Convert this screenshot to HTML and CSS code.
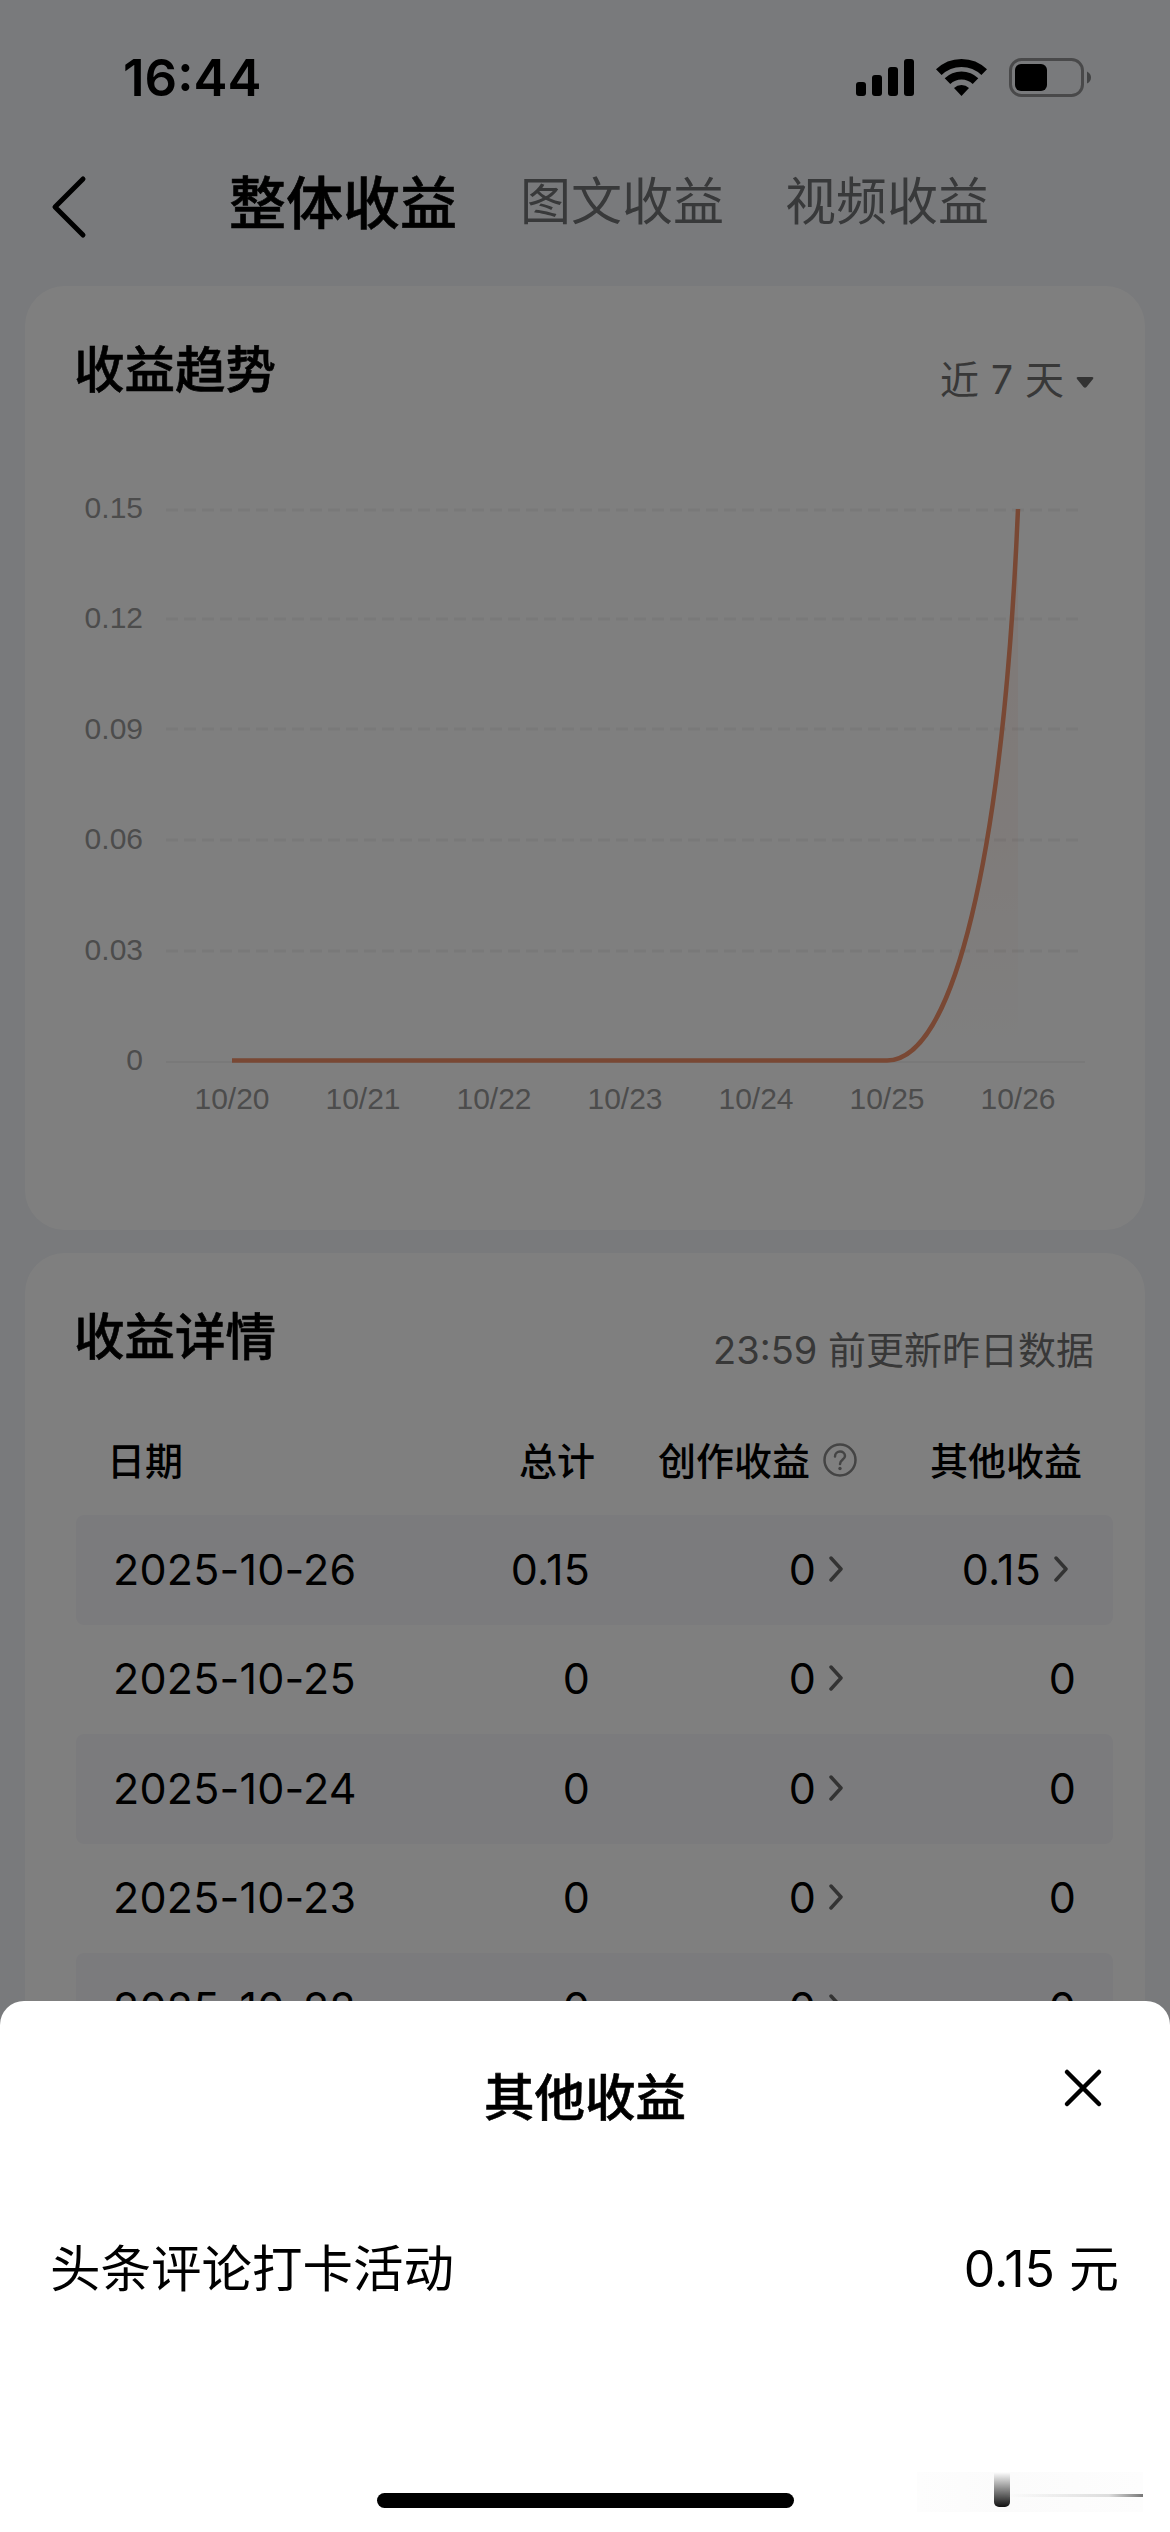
FILE: index.html
```
<!DOCTYPE html>
<html lang="zh-CN">
<head>
	<meta charset="utf-8">
	<title>整体收益</title>
	<link rel="stylesheet" href="styles.css">
</head>
<body>
	<div class="page">
		<div class="status-bar">
			<span class="time">16:44</span>
			<svg class="status-icons" width="236" height="40" viewBox="0 0 236 40">
				<!-- signal -->
				<rect x="0" y="24" width="10" height="14" rx="3"/>
				<rect x="16" y="17" width="10" height="21" rx="3"/>
				<rect x="32" y="9" width="10" height="29" rx="3"/>
				<rect x="48" y="1" width="10" height="37" rx="3"/>
				<!-- wifi -->
				<path class="wave" d="M82.800 14.200 A32.500 32.500 0 0 1 128.200 14.200"/>
				<path class="wave" d="M91.500 23.200 A20 20 0 0 1 119.500 23.200"/>
				<path d="M98 30 A11 11 0 0 1 113 30 L105.500 38 Z"/>
				<!-- battery -->
				<rect class="battery-line" x="154.500" y="1.500" width="72" height="36" rx="11"/>
				<rect x="159" y="6" width="32" height="27" rx="6"/>
				<path class="battery-cap" d="M231 13.500 Q235 15.500 235 19.500 Q235 23.500 231 25.500 Z"/>
			</svg>
		</div>

		<div class="nav">
			<svg class="back" width="36" height="64" viewBox="0 0 36 64">
				<path d="M32 4 L4 32 L32 60"/>
			</svg>
			<span class="tab active">整体收益</span>
			<span class="tab">图文收益</span>
			<span class="tab">视频收益</span>
		</div>

		<div class="card trend">
			<div class="card-head">
				<h2>收益趋势</h2>
				<span class="range">近 7 天
					<svg width="18" height="13" viewBox="0 0 18 13"><path d="M2 1 H16 Q18 1 17 3 L10.500 11 Q9 12.500 7.500 11 L1 3 Q0 1 2 1 Z"/></svg>
				</span>
			</div>
			<svg class="chart" width="1120" height="660" viewBox="25 480 1120 660">
				<defs>
					<linearGradient id="area" x1="0" y1="0" x2="0" y2="1">
						<stop offset="0" stop-color="#ff7f50" stop-opacity="0.10"/>
						<stop offset="0.600" stop-color="#ff7f50" stop-opacity="0.060"/>
						<stop offset="1" stop-color="#ff7f50" stop-opacity="0"/>
					</linearGradient>
				</defs>
				<g class="grid">
					<path d="M166 510 H1080 M166 619 H1080 M166 729 H1080 M166 840 H1080 M166 951 H1080"/>
					<path class="axis" d="M166 1062 H1085"/>
				</g>
				<g class="y-labels">
					<text x="143" y="518">0.15</text>
					<text x="143" y="628">0.12</text>
					<text x="143" y="739">0.09</text>
					<text x="143" y="849">0.06</text>
					<text x="143" y="960">0.03</text>
					<text x="143" y="1070">0</text>
				</g>
				<g class="x-labels">
					<text x="232" y="1109">10/20</text>
					<text x="363" y="1109">10/21</text>
					<text x="494" y="1109">10/22</text>
					<text x="625" y="1109">10/23</text>
					<text x="756" y="1109">10/24</text>
					<text x="887" y="1109">10/25</text>
					<text x="1018" y="1109">10/26</text>
				</g>
				<path fill="url(#area)" d="M887 1060 C953 1060 1003 860 1018 509 V1060 Z"/>
				<path class="line" d="M232 1060.500 H887 C953 1060.500 1003 860 1018 509"/>
			</svg>
		</div>

		<div class="card detail">
			<div class="card-head">
				<h2>收益详情</h2>
				<span class="update">23:59 前更新昨日数据</span>
			</div>
			<div class="row head">
				<span>日期</span>
				<span>总计</span>
				<span>创作收益
					<svg class="help" width="36" height="36" viewBox="0 0 36 36">
						<circle cx="18" cy="18" r="15.500"/>
						<path d="M13 14.500 C13 8 23 8 23 14 C23 17.500 18 17.500 18 22"/>
						<circle class="dot" cx="18" cy="26.500" r="1.700"/>
					</svg>
				</span>
				<span>其他收益</span>
			</div>
			<div class="row odd">
				<span>2025-10-26</span>
				<span>0.15</span>
				<span>0<svg class="arrow" width="14" height="26" viewBox="0 0 14 26"><path d="M2 2 L12 13 L2 24"/></svg></span>
				<span class="link">0.15<svg class="arrow" width="14" height="26" viewBox="0 0 14 26"><path d="M2 2 L12 13 L2 24"/></svg></span>
			</div>
			<div class="row">
				<span>2025-10-25</span>
				<span>0</span>
				<span>0<svg class="arrow" width="14" height="26" viewBox="0 0 14 26"><path d="M2 2 L12 13 L2 24"/></svg></span>
				<span>0</span>
			</div>
			<div class="row odd">
				<span>2025-10-24</span>
				<span>0</span>
				<span>0<svg class="arrow" width="14" height="26" viewBox="0 0 14 26"><path d="M2 2 L12 13 L2 24"/></svg></span>
				<span>0</span>
			</div>
			<div class="row">
				<span>2025-10-23</span>
				<span>0</span>
				<span>0<svg class="arrow" width="14" height="26" viewBox="0 0 14 26"><path d="M2 2 L12 13 L2 24"/></svg></span>
				<span>0</span>
			</div>
			<div class="row odd">
				<span>2025-10-22</span>
				<span>0</span>
				<span>0<svg class="arrow" width="14" height="26" viewBox="0 0 14 26"><path d="M2 2 L12 13 L2 24"/></svg></span>
				<span>0</span>
			</div>
		</div>
	</div>

	<div class="mask"></div>

	<!-- Bottom sheet -->
	<div class="sheet">
		<div class="sheet-head">
			<h3>其他收益</h3>
			<svg class="close" width="42" height="42" viewBox="0 0 42 42"><path d="M5 5 L37 37 M37 5 L5 37"/></svg>
		</div>
		<div class="sheet-item">
			<span>头条评论打卡活动</span>
			<span class="amount">0.15 元</span>
		</div>
		<div class="home-bar"></div>
		<div class="smudge"><i></i></div>
	</div>
</body>
</html>
```

FILE: styles.css
```
* {
	box-sizing: border-box;
}
body {
	background: #f3f5f8;
	color: #000;
	font-family: Inter, "Noto Sans CJK SC", sans-serif;
	height: 2532px;
	margin: 0;
	overflow: hidden;
	position: relative;
	width: 1170px;
}
h2, h3 {
	-webkit-text-stroke: 0.600px #000;
	font-size: 50.500px;
	font-weight: 500;
	line-height: 60px;
	margin: 0;
}
.page {
	height: 2532px;
	overflow: hidden;
}
.status-bar {
	align-items: flex-start;
	display: flex;
	height: 150px;
	justify-content: space-between;
	padding: 58px 78px 0 123px;
}
.time {
	font-size: 51px;
	font-weight: 600;
	line-height: 40px;
}
.wave {
	fill: none;
	stroke: #000;
	stroke-width: 8;
}
.battery-line {
	fill: none;
	stroke: #000;
	stroke-opacity: 0.4;
	stroke-width: 3;
}
.battery-cap {
	fill-opacity: 0.45;
}
.nav {
	align-items: center;
	display: flex;
	height: 136px;
	padding-left: 51px;
	padding-bottom: 28px;
}
.back {
	fill: none;
	margin-right: 142px;
	margin-top: 6px;
	stroke: #000;
	stroke-linecap: round;
	stroke-linejoin: round;
	stroke-width: 5;
}
.tab {
	color: #707275;
	font-size: 51px;
	line-height: 60px;
	margin-bottom: 5px;
	margin-right: 61px;
}
.tab.active {
	-webkit-text-stroke: 0.600px #000;
	color: #000;
	font-size: 57px;
	font-weight: 500;
	margin-bottom: 0;
	margin-right: 63px;
}
.card {
	background: #fff;
	border-radius: 40px;
	margin: 0 25px;
}
.trend {
	height: 944px;
	margin-bottom: 23px;
}
.card-head {
	display: flex;
	height: 124px;
	justify-content: space-between;
	padding: 54px 51px 0 49px;
}
.range, .update {
	color: #707070;
	font-size: 39px;
	line-height: 60px;
	margin-top: 10px;
}
.range {
	word-spacing: 1px;
}
.range svg {
	fill: #666;
	vertical-align: 5px;
}
.update {
	font-size: 38px;
	margin-top: 13px;
}
.chart {
	display: block;
	margin-top: 70px;
}
.chart text {
	fill: #999;
	font-family: "Liberation Sans", sans-serif;
	font-size: 30px;
}
.y-labels {
	text-anchor: end;
}
.x-labels {
	text-anchor: middle;
}
.grid path {
	stroke: #f2f2f2;
	stroke-dasharray: 12 6;
	stroke-width: 3;
}
.grid .axis {
	stroke-dasharray: none;
	stroke-width: 2;
}
.chart .line {
	fill: none;
	stroke: #f29068;
	stroke-width: 4.500;
}
.detail {
	height: 900px;
}
.row {
	align-items: center;
	border-radius: 8px;
	display: grid;
	font-size: 43px;
	grid-template-columns: 245px 232px 253px 233px;
	height: 109.500px;
	letter-spacing: 0.200px;
	margin: 0 32px 0 51px;
	padding-bottom: 2px;
	padding-left: 37px;
}
.row span {
	align-items: center;
	display: flex;
	justify-content: flex-end;
}
.row span:first-child {
	justify-content: flex-start;
}
.odd {
	background: #f7f7fa;
}
.head {
	font-size: 38px;
	font-weight: 500;
	grid-template-columns: 245px 243px 263px 224px;
	height: 108px;
	letter-spacing: 0;
	margin-top: 30px;
	padding-bottom: 6px;
	padding-left: 31px;
}
.arrow {
	fill: none;
	margin-left: 13px;
	stroke: #666;
	stroke-linecap: round;
	stroke-linejoin: round;
	stroke-width: 3.500;
}
.link {
	margin-right: 8px;
}
.help {
	fill: none;
	margin-left: 12px;
	margin-top: 4px;
	stroke: #888;
	stroke-linecap: round;
	stroke-width: 2.500;
}
.help .dot {
	fill: #888;
	stroke: none;
}
.mask {
	background: rgba(0, 0, 0, 0.5);
	inset: 0;
	position: absolute;
}
.sheet {
	background: #fff;
	border-radius: 24px 24px 0 0;
	bottom: 0;
	height: 531px;
	left: 0;
	position: absolute;
	right: 0;
}
.sheet-head {
	padding-top: 67px;
	text-align: center;
}
.close {
	fill: none;
	position: absolute;
	right: 66px;
	stroke: #000;
	stroke-linecap: round;
	stroke-width: 4.500;
	top: 66px;
}
.sheet-item {
	display: flex;
	font-size: 50.500px;
	justify-content: space-between;
	line-height: 60px;
	padding: 111px 51px 0 50px;
}
.amount {
	font-size: 50px;
}
.home-bar {
	background: #000;
	border-radius: 8px;
	height: 15px;
	margin: 194px auto 0;
	width: 417px;
}
.smudge {
	background: linear-gradient(90deg, #fdfdfd, #fbfbfb 40%, #fdfdfd);
	bottom: 20px;
	height: 40px;
	position: absolute;
	right: 27px;
	width: 226px;
}
.smudge::after {
	background: linear-gradient(90deg, transparent, #ddd 75%, #777);
	content: "";
	height: 3px;
	left: 90px;
	position: absolute;
	right: 0;
	top: 22px;
}
.smudge i {
	background: linear-gradient(#fff, #888 50%, #111);
	border-radius: 0 0 5px 5px;
	height: 35px;
	left: 77px;
	position: absolute;
	top: 0;
	width: 16px;
}
```
